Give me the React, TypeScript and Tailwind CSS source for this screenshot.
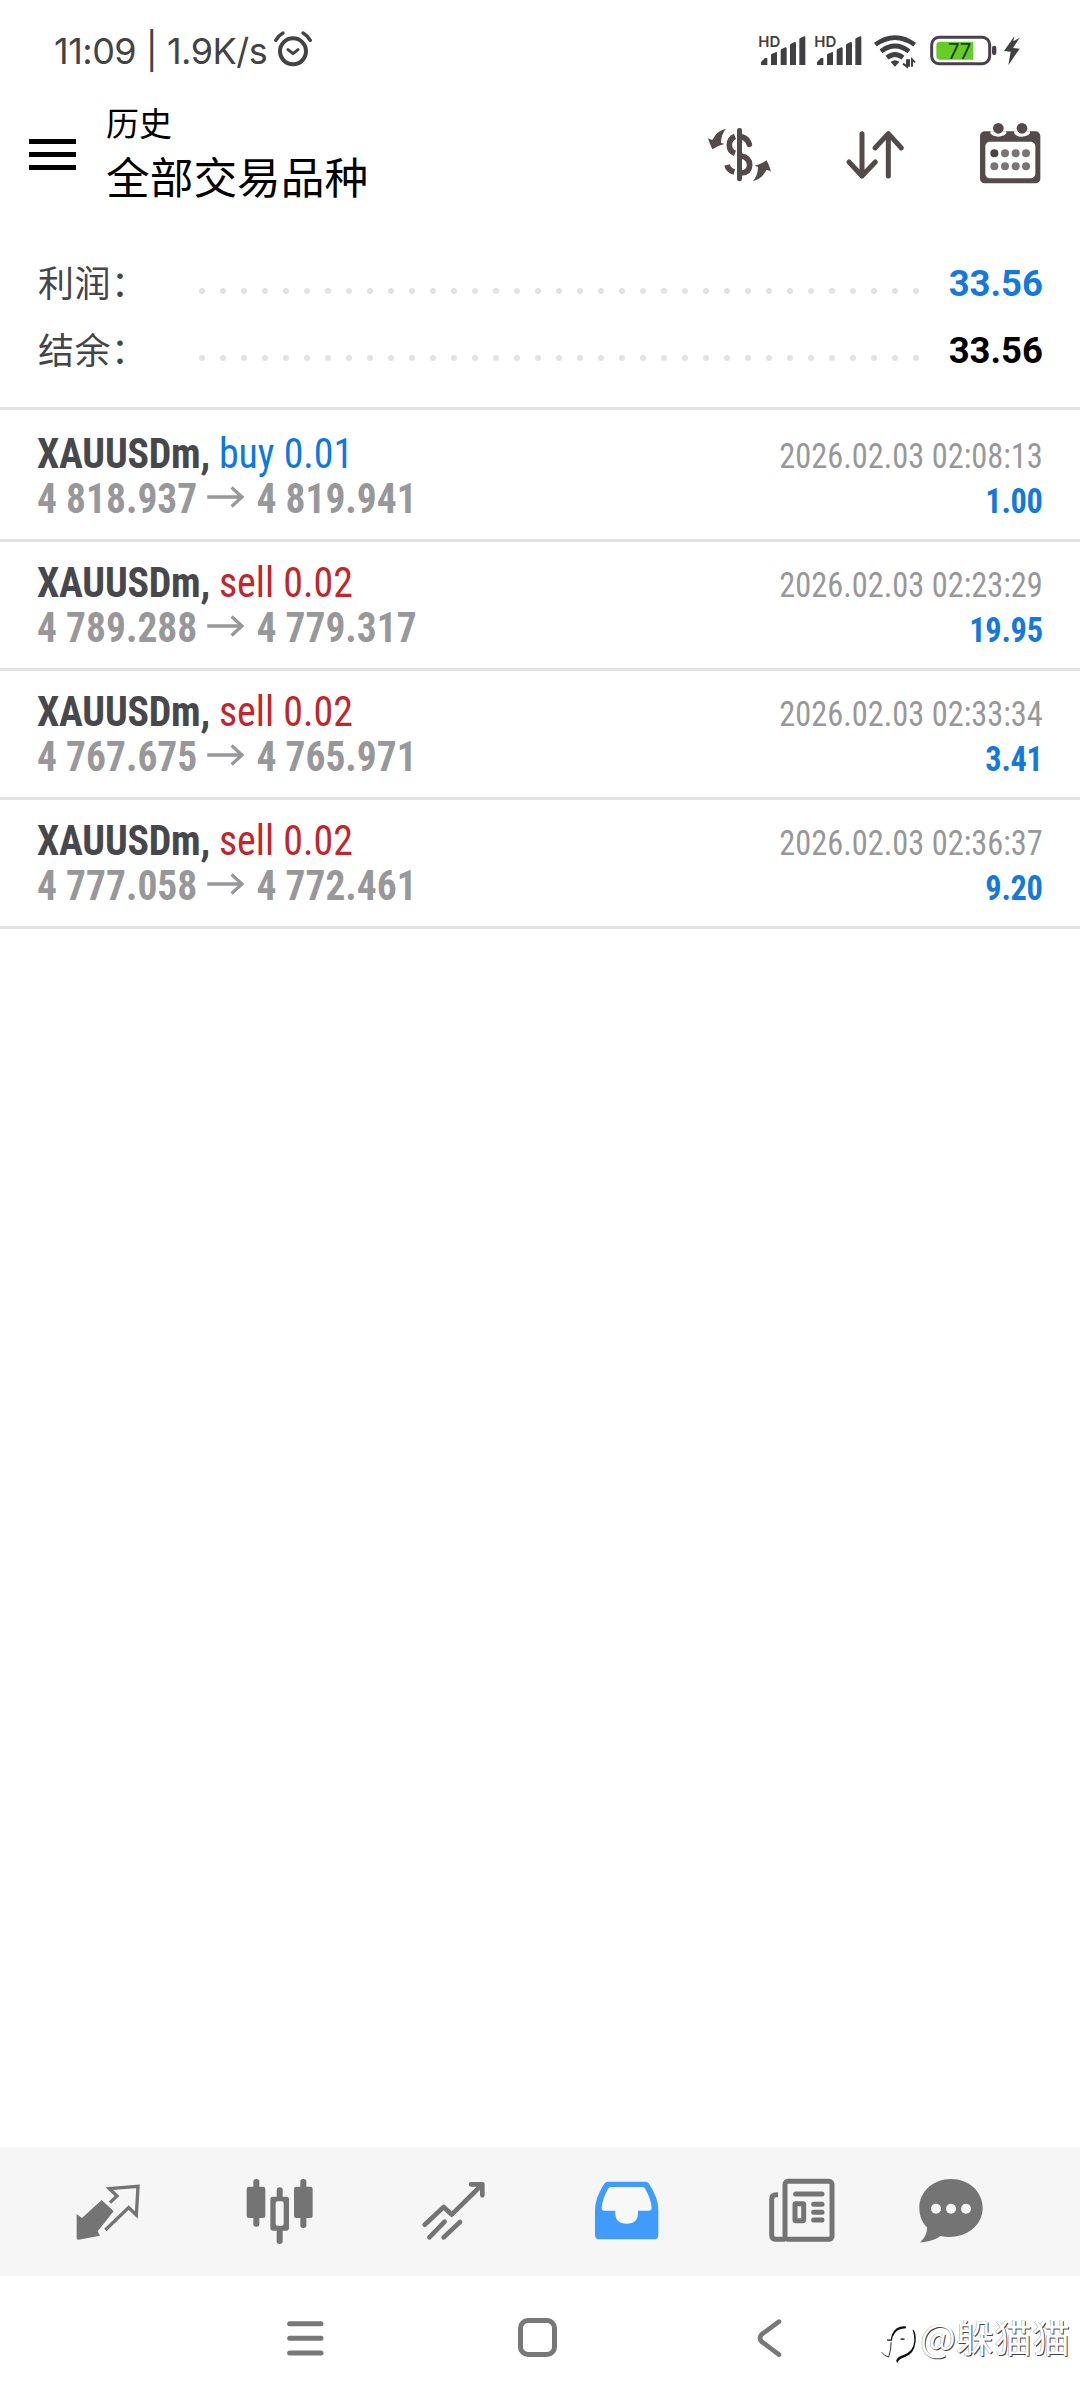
import type { ReactNode } from "react";

type Deal = {
  symbol: string;
  side: "buy" | "sell";
  volume: string;
  open: string;
  close: string;
  time: string;
  profit: string;
};

const deals: Deal[] = [
  { symbol: "XAUUSDm", side: "buy", volume: "0.01", open: "4 818.937", close: "4 819.941", time: "2026.02.03 02:08:13", profit: "1.00" },
  { symbol: "XAUUSDm", side: "sell", volume: "0.02", open: "4 789.288", close: "4 779.317", time: "2026.02.03 02:23:29", profit: "19.95" },
  { symbol: "XAUUSDm", side: "sell", volume: "0.02", open: "4 767.675", close: "4 765.971", time: "2026.02.03 02:33:34", profit: "3.41" },
  { symbol: "XAUUSDm", side: "sell", volume: "0.02", open: "4 777.058", close: "4 772.461", time: "2026.02.03 02:36:37", profit: "9.20" },
];

function SignalBars({ x }: { x: number }) {
  return (
    <g fill="#403f41">
      <text x={x - 8} y="140" fontFamily="Inter, sans-serif" fontWeight="600" fontSize="44" textLength="66" lengthAdjust="spacingAndGlyphs">HD</text>
      <path d={`M${x} 195v-9l12-12h7v21z`} />
      <path d={`M${x + 30} 195v-30q0-3 3-4l13-5q2 0 2 3v36z`} />
      <path d={`M${x + 59} 195v-44q0-3 3-4l11-5q4 0 4 3v50z`} />
      <path d={`M${x + 87} 195v-60q0-3 3-4l11-5q4 0 4 3v66z`} />
      <path d={`M${x + 115} 195v-77q0-3 3-4l11-5q4 0 4 3v83z`} />
    </g>
  );
}

function StatusBar() {
  return (
    <div className="flex h-[96px] items-start justify-between">
      <div className="flex pt-[29px] pl-[54px] font-[Inter,sans-serif] text-[36px] leading-[44px] text-[#434343]">
        <span className="whitespace-pre tracking-[-0.5px]">11:09 | 1.9K/s</span>
        <svg className="ml-[6px] size-[40px]" viewBox="819 90 120 120" fill="none" stroke="#434343" strokeLinecap="round">
          <circle cx="879" cy="157" r="39" strokeWidth="12" />
          <path d="M864 152l15 12 15-12" strokeWidth="9" strokeLinejoin="round" />
          <path d="M827 124q8-14 22-22M909 102q14 8 22 22" strokeWidth="10" />
        </svg>
      </div>
      <svg className="mt-[30px] mr-[55px] h-[45px] w-[270px]" viewBox="225 90 810 135">
        <SignalBars x={243} />
        <SignalBars x={411} />
        <g fill="none" stroke="#403f41" strokeWidth="14">
          <path d="M586 134Q645 92 704 134" />
          <path d="M603 154Q645 122 687 154" />
          <path d="M621 173Q645 154 669 173" />
        </g>
        <path d="M632 186q13-10 26 0l-13 14z" fill="#403f41" />
        <path d="M681 178v22l-12-9M687 200v-22m9 22v-22l9 9" fill="none" stroke="#403f41" strokeWidth="6" />
        <rect x="755" y="112" width="174" height="79" rx="22" fill="none" stroke="#4a404b" strokeWidth="9" />
        <path d="M780 125h100v54h-100q-11 0-11-11v-32q0-11 11-11z" fill="#66cc26" />
        <text x="804" y="176" fontFamily="Inter, sans-serif" fontSize="66" textLength="70" lengthAdjust="spacingAndGlyphs" fill="#173a12">77</text>
        <rect x="936" y="137" width="13" height="28" rx="6" fill="#4a404b" />
        <path d="M1003 109l-31 44 20 2-7 41 34-50-20-2 20-31-19 11z" fill="#403f41" />
      </svg>
    </div>
  );
}

function Header() {
  return (
    <header className="flex h-[124px] items-start">
      <div className="mt-[43px] ml-[29px] flex w-[47px] flex-col gap-2">
        <div className="h-[5px] bg-black" />
        <div className="h-[5px] bg-black" />
        <div className="h-[5px] bg-black" />
      </div>
      <div className="ml-[30px] flex-1 text-black">
        <div className="mt-[11px] text-[33px] leading-[36px]">历史</div>
        <div className="mt-[11px] text-[43.7px] leading-[50px]">全部交易品种</div>
      </div>
      <div className="mt-[22px] mr-[34px] flex gap-[60px]">
        <svg className="size-[74px]" viewBox="72 353 222 222">
          <g fill="#544a49">
            <path d="M84 413q7 6 14 5 12-27 40-33-15 18-15 42l10 4q-18 4-36 16-9-18-13-34z" />
            <path d="M84 413q7 6 14 5 12-27 40-33-15 18-15 42l10 4q-18 4-36 16-9-18-13-34z" transform="rotate(180 178.5 463.5)" />
            <rect x="171" y="383" width="15" height="160" rx="7" />
          </g>
          <g fill="none" stroke="#544a49" strokeWidth="17">
            <path d="M165 408Q148 415 148 434T165 459" />
            <path d="M186 410q17 5 22 22" strokeLinecap="round" />
            <path d="M184 467q25 5 25 27t-25 24" />
            <path d="M163 515q-18-5-22-21" />
          </g>
        </svg>
        <svg className="size-[74px]" viewBox="475 353 222 222" fill="none" stroke="#544a49" strokeWidth="15" strokeLinecap="round" strokeLinejoin="round">
          <path d="M547 400v127M508 485l39 42 40-42M626 527V400M586 443l40-43 39 43" />
        </svg>
        <svg className="size-[74px]" viewBox="876 353 222 222">
          <rect x="900" y="393" width="181" height="156" rx="14" fill="#544a49" />
          <path d="M931 393v6q8 10 24 10t24-10v-6M1002 393v6q8 10 24 10t24-10v-6" fill="#fff" />
          <circle cx="955" cy="384" r="16" fill="#544a49" />
          <circle cx="1026" cy="384" r="16" fill="#544a49" />
          <rect x="916" y="424" width="150" height="110" rx="14" fill="#fff" />
          {[459, 498].map((y) => [943, 975, 1007, 1038].map((x) => (
            <circle key={`${x}-${y}`} cx={x} cy={y} r="12" fill={x === 943 && y === 459 ? "#4a4242" : "#7a7474"} />
          )))}
        </svg>
      </div>
    </header>
  );
}

function SummaryRow({ label, value, valueClass }: { label: string; value: string; valueClass: string }) {
  return (
    <div className="flex h-[67px] items-center">
      <span className="w-[162px] pt-[3px] pl-px text-[36px] tracking-[0.5px] text-[#454548]">{label}</span>
      <div className="mt-[15px] flex w-[720px] justify-between">
        {Array.from({ length: 35 }, (_, i) => <i key={i} className="size-[6px] rounded-full bg-[#e3e3e3]" />)}
      </div>
      <span className={`flex-1 pt-[2px] text-right text-[36.5px] ${valueClass}`}>{value}</span>
    </div>
  );
}

function DealRow({ deal }: { deal: Deal }) {
  return (
    <div className="flex h-[129px] justify-between border-b-3 border-[#e3e3e3] px-[37px] pt-[18px] font-['Roboto_Condensed',Roboto,sans-serif] font-stretch-condensed">
      <div className="text-[42px] leading-[45px]">
        <div className="origin-left scale-x-[0.95] whitespace-pre">
          <span className="font-bold tracking-[-0.25px] text-[#48484c]">{deal.symbol}, </span>
          <span className={deal.side === "buy" ? "text-[#0f78e0]" : "text-[#c0262b]"}>{deal.side} {deal.volume}</span>
        </div>
        <div className="flex origin-left scale-x-[0.94] items-center font-bold text-[#98989a]">
          <span>{deal.open}</span>
          <svg className="mr-[12px] mb-[3px] ml-[11px] h-[22px] w-[40px]" viewBox="0 0 40 22" fill="none" stroke="currentColor" strokeWidth="3.500">
            <path d="M0 11h37M26 1.500l11 9.500-11 9.500" />
          </svg>
          <span>{deal.close}</span>
        </div>
      </div>
      <div className="pt-[3px] text-right text-[35px] leading-[45px]">
        <div className="origin-right scale-x-[0.925] text-[#98989a]">{deal.time}</div>
        <div className="origin-right scale-x-[0.925] font-bold tracking-[-0.3px] text-[#1478dc]">{deal.profit}</div>
      </div>
    </div>
  );
}

function Tab({ viewBox, last, active, children }: { viewBox: string; last?: boolean; active?: boolean; children: ReactNode }) {
  return (
    <div className={`flex items-center justify-center ${last ? "w-[125px]" : "w-[173.5px]"} ${active ? "text-[#419bfa]" : "text-[#747474]"}`}>
      <svg className="size-[72px]" viewBox={viewBox} fill="currentColor">{children}</svg>
    </div>
  );
}

function TabBar() {
  return (
    <nav className="flex h-[129px] bg-[#f6f6f6] pl-[21px]">
      <Tab viewBox="215 136 216 216">
        <path d="M229 250l16 12 59-54 36 34-48 60 7 13-65 12q-5 0-5-5z" />
        <path d="M329 216l21-20-23-22 86-7-5 86-23-22-70 67" fill="none" stroke="currentColor" strokeWidth="10" />
      </Tab>
      <Tab viewBox="736 136 216 216">
        <rect x="761" y="145" width="18" height="143" rx="8" />
        <rect x="741" y="168" width="56" height="94" rx="7" />
        <rect x="902" y="145" width="18" height="147" rx="8" />
        <rect x="883" y="168" width="56" height="94" rx="7" />
        <path d="M831 198v-20q0-8 9-8t9 8v20h12q7 0 7 7v88q0 7-7 7h-12v32q0 8-9 8t-9-8v-32h-12q-7 0-7-7v-88q0-7 7-7zM828 218v61q0 6 6 6h12q6 0 6-6v-61q0-6-6-6h-12q-6 0-6 6z" fillRule="evenodd" />
      </Tab>
      <Tab viewBox="176 136 216 216">
        <path d="M193 282l57-53 24 23 90-89M332 161h34v33M207 320l46-47M250 320l49-46" fill="none" stroke="currentColor" strokeWidth="14" strokeLinecap="round" strokeLinejoin="round" />
      </Tab>
      <Tab viewBox="697 136 216 216" active>
        <path d="M746 153h110q10 0 14 9 26 40 26 76v74q0 14-14 14H720q-14 0-14-14v-74q0-36 26-76 4-9 14-9z" />
        <path d="M754 169h94q6 0 9 6 17 30 19 58 0 7-7 7h-34v7q0 32-34 32t-34-32v-7h-34q-7 0-7-7 2-28 19-58 3-6 9-6z" fill="#f8f8f8" />
      </Tab>
      <Tab viewBox="137 136 216 216">
        <path d="M173 192h-5q-14 0-14 14v106q0 14 14 14h26" fill="none" stroke="currentColor" strokeWidth="15" />
        <rect x="194" y="152" width="141" height="174" rx="9" fill="none" stroke="currentColor" strokeWidth="15" />
        <path d="M226 190h79M280 221h25M280 244.500h25M280 268h25" stroke="currentColor" strokeWidth="15" strokeLinecap="round" />
        <rect x="224" y="219" width="26" height="51" rx="2" fill="none" stroke="currentColor" strokeWidth="15" />
      </Tab>
      <Tab viewBox="585 136 216 216" last>
        <path d="M693 145c53 0 95 38 95 86 0 62-63 98-127 85-16 12-38 18-61 19 14-12 22-28 21-45-14-14-23-34-23-59 0-48 42-86 95-86z" />
        <g fill="#f6f6f6">
          <circle cx="648" cy="234" r="15" />
          <circle cx="693" cy="234" r="15" />
          <circle cx="738" cy="234" r="15" />
        </g>
      </Tab>
    </nav>
  );
}

function SystemNav() {
  return (
    <div className="flex h-[124px] pl-[188px]">
      <div className="flex w-[233px] shrink-0 justify-center pt-[39px]">
        <svg className="h-[45px] w-[42px]" viewBox="849 554 126 135" stroke="#787878" strokeWidth="15" strokeLinecap="round">
          <path d="M866 580h94M866 624h94M866 668h94" />
        </svg>
      </div>
      <div className="flex w-[232px] shrink-0 justify-center pt-[42px]">
        <div className="size-[39px] rounded-[10px] border-5 border-[#787878]" />
      </div>
      <div className="flex w-[232px] shrink-0 justify-center pt-[39px]">
        <svg className="h-[45px] w-[42px]" viewBox="81 554 126 135" fill="none" stroke="#787878" strokeWidth="14" strokeLinecap="round">
          <path d="M174 574l-52 38q-10 11 0 22l52 39" />
        </svg>
      </div>
      <div className="-ml-[10px] flex flex-1 justify-end pt-[34px] pr-[10px] text-white">
        <svg className="mt-[13px] h-[42px] w-[37px] shrink-0" viewBox="25 70 110 125">
          <g fill="none" stroke="#111" strokeWidth="4">
            <path d="M46 121h13q2-34 43-38" />
            <path d="M86 118h12" />
            <path d="M30 157q8 12 21 14 7-20 7-44" strokeWidth="2.500" />
          </g>
          <path d="M101 80v6q-28-2-36 22l-5-2q10-28 41-26zM125 90q8 12 6 36-4 38-35 47-14 3-20 17l-3-9q6-12 20-15 32-10 34-43 0-20-5-33z" fill="#111" />
        </svg>
        <span className="ml-[3px] font-['Noto_Sans_CJK_SC',sans-serif] text-[38px] leading-[52px] whitespace-nowrap [text-shadow:1px_1px_0_#444,-0.500px_-0.500px_0_#999]">@躲猫猫</span>
      </div>
    </div>
  );
}

export default function App() {
  return (
    <div className="flex h-[2400px] w-[1080px] flex-col bg-white font-[Roboto,'Noto_Sans_CJK_SC',sans-serif]">
      <StatusBar />
      <Header />
      <section className="h-[190px] border-b-3 border-[#e3e3e3] px-[37px] pt-[30px]">
        <SummaryRow label="利润：" value="33.56" valueClass="font-bold text-[#1478dc]" />
        <SummaryRow label="结余：" value="33.56" valueClass="font-bold text-black" />
      </section>
      <main className="flex-1 pt-[3px]">
        {deals.map((deal) => <DealRow key={deal.time} deal={deal} />)}
      </main>
      <TabBar />
      <SystemNav />
    </div>
  );
}
